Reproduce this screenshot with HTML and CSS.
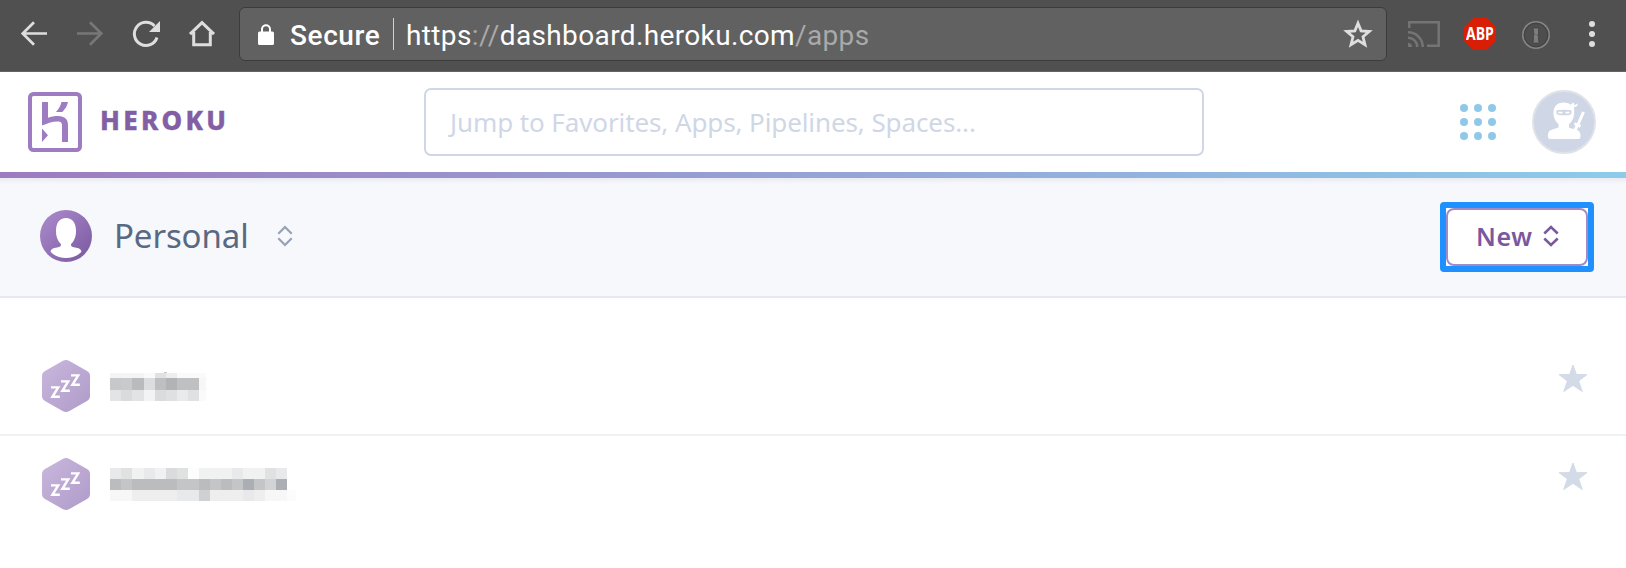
FILE: index.html
```html
<!DOCTYPE html>
<html lang="en">
<head>
<meta charset="utf-8">
<title>Heroku Dashboard</title>
<link rel="stylesheet" href="styles.css">
</head>
<body>
<div class="toolbar">
  <svg class="nav-icon" viewBox="0 0 28 28"><path d="M27 13.500H3M14 2.300 2.700 13.500 14 24.800" fill="none" stroke="#dedede" stroke-width="2.700"/></svg>
  <svg class="nav-icon" viewBox="0 0 28 28"><path d="M1 13.500h24M14 2.300l11.300 11.200L14 24.800" fill="none" stroke="#777" stroke-width="2.700"/></svg>
  <svg class="nav-icon" viewBox="0 0 28 28"><path d="M25 17.500A11.600 11.600 0 1 1 22.500 6" fill="none" stroke="#dedede" stroke-width="3"/><path d="M28 1v11H17z" fill="#dedede"/></svg>
  <svg class="nav-icon" viewBox="0 0 28 28"><path d="M2 14.200 14 2.600l12 11.600M5.700 12v12.800h16.600V12" fill="none" stroke="#dedede" stroke-width="3"/></svg>
  <div class="omnibox">
    <svg class="lock" viewBox="0 0 16 21"><path d="M4 9V5.200a4 4 0 0 1 8 0V9" fill="none" stroke="#fff" stroke-width="2"/><rect y="7.600" width="16" height="13.400" rx="1.600" fill="#fff"/></svg>
    <span class="secure">Secure</span>
    <span class="divider"></span>
    <span class="url">https<span class="dim">://</span>dashboard.heroku.com<span class="dim">/apps</span></span>
    <svg class="bookmark" viewBox="0 0 30 30"><path d="M15 4.300l3.100 7.600 8.200.6-6.300 5.300 2 8-7-4.400-7 4.400 2-8-6.300-5.300 8.200-.6z" fill="none" stroke="#dedede" stroke-width="2.800"/></svg>
  </div>
  <svg class="cast" viewBox="0 0 32 26" fill="none" stroke="#747474" stroke-width="2.500"><path d="M1.300 7V1.300h29.400v23.400H19"/><path d="M0 11.300A14.500 14.500 0 0 1 14.700 26M0 16.800A9 9 0 0 1 9.200 26"/><path d="M0 21.700A4.300 4.300 0 0 1 4.300 26H0z" fill="#747474" stroke="none"/></svg>
  <div class="abp"><span class="abp-label">ABP</span></div>
  <svg class="onepass" viewBox="0 0 30 30"><circle cx="15" cy="15" r="13.200" fill="none" stroke="#858585" stroke-width="1.600"/><circle cx="15" cy="15" r="11.700" fill="#4e4e4e" stroke="#414141"/><path d="M12 8h5.500v6l-1 1.300 1 1v4.500H18V23h-6v-2.200h.5V15.300l1-1-1-1.300V10H12z" fill="#7c7c7c" stroke="#3f3f3f" stroke-width=".7"/></svg>
  <svg class="more" viewBox="0 0 6 26" fill="#dedede"><circle cx="3" cy="3" r="3"/><circle cx="3" cy="13" r="3"/><circle cx="3" cy="23" r="3"/></svg>
</div>

<header class="header">
  <svg class="logo" viewBox="0 0 54 60" fill="#9e7cc1"><rect x="2" y="2" width="50" height="56" rx="3.500" fill="none" stroke="#9e7cc1" stroke-width="4"/><path d="M14 10h6v15.700c3-1 6.500-1.700 10-1.700 7 0 10 3.500 10 9v17h-6V33c0-2-1-3.600-4.500-3.600-5.500 0-11 2.100-15.500 4.200z"/><path d="M14 36.500v13.500l6-6.700zM33.500 10H40c-.7 3.800-3 7.300-5.700 10H28c2.700-3 4.800-6.500 5.500-10z"/></svg>
  <span class="brand">HEROKU</span>
  <div class="search">Jump to Favorites, Apps, Pipelines, Spaces...</div>
  <svg class="grid" viewBox="0 0 36 36" fill="#8fc9e9"><circle cx="4" cy="4" r="4"/><circle cx="18" cy="4" r="4"/><circle cx="32" cy="4" r="4"/><circle cx="4" cy="18" r="4"/><circle cx="18" cy="18" r="4"/><circle cx="32" cy="18" r="4"/><circle cx="4" cy="32" r="4"/><circle cx="18" cy="32" r="4"/><circle cx="32" cy="32" r="4"/></svg>
  <svg class="avatar" viewBox="0 0 64 64"><circle cx="32" cy="32" r="31" fill="#cfd7e6" stroke="#dfe2e9" stroke-width="2"/><path d="M21.500 23c0-7 4-10.500 10-10.500 3 0 5.500.8 7.300 2.300l2.500-2.600 1.200 2.800 3.500-1.500-1 2.800-3 .9c.8 9-.8 13-5 17v3.500l8 2.300c2.300.8 3.500 3 3.500 5.500v1.500q0 2-2 2H18q-2 0-2-2V45c0-2.800 1.500-4.500 3.500-5.200l7-2.300V34c-3-2.500-5-6-5-11z" fill="#fff"/><path d="M24.500 20.300q7.500-1.300 15 0v3q-1 2-3.500 2h-8q-2.500 0-3.500-2z" fill="#cfd7e6"/><path d="M26.500 22.700h4M33.500 22.700h4" stroke="#fff" stroke-width="1.800"/><path d="M51.500 22 46 34.500M42.500 33.500l6 3M45 36 42.500 41" fill="none" stroke="#fff" stroke-width="3"/></svg>
</header>
<div class="stripe"></div>

<div class="context">
  <svg class="person" viewBox="0 0 52 52"><defs><linearGradient id="pg" x1="0" y1="0" x2="1" y2="1"><stop stop-color="#ad8ccd"/><stop offset="1" stop-color="#79589f"/></linearGradient></defs><circle cx="26" cy="26" r="26" fill="url(#pg)"/><path d="M26 8c6.500 0 10 5 10 13 0 6-2 10.500-5 13 0 2.500.8 3 4 3.500 4 .7 5.500 1.300 6.500 4C38 46 32 48 26 48s-12-2-15.500-6.500c1-2.700 2.500-3.300 6.500-4 3.200-.5 4-1 4-3.500-3-2.500-5-7-5-13 0-8 3.500-13 10-13z" fill="#fff"/></svg>
  <span class="account">Personal</span>
  <svg class="chev" viewBox="0 0 16 22"><path d="M1.300 8.700 8 2l6.700 6.700M1.300 13.300 8 20l6.700-6.700" fill="none" stroke="#96a1b5" stroke-width="2.200"/></svg>
  <div class="highlight">
    <div class="new"><span class="new-label">New</span><svg class="new-chev" viewBox="0 0 16 22"><path d="M1.300 8.500 8 2l6.700 6.500M1.300 13.500 8 20l6.700-6.500" fill="none" stroke="#79589f" stroke-width="2.500"/></svg></div>
  </div>
</div>

<main class="apps">
  <div class="app first">
    <svg class="hex" viewBox="0 0 48 52"><defs><linearGradient id="hg" x1="0" y1="0" x2="1" y2="1"><stop stop-color="#c9b7de"/><stop offset="1" stop-color="#af9bc8"/></linearGradient></defs><path d="M21 .8q3-1.600 6 0l18 10.200q3 1.700 3 5v20q0 3.300-3 5L27 51.200q-3 1.600-6 0L3 41q-3-1.700-3-5V16q0-3.300 3-5z" fill="url(#hg)"/><path d="M9 27.400h7.200l-5.800 9.400h7.400M19 21.400h7.200l-5.800 9.400h7.400M29 15.400h7.200l-5.800 9.400h7.400" fill="none" stroke="#fff" stroke-width="2.400"/></svg>
    <svg class="redacted" viewBox="0 0 186 33" shape-rendering="crispEdges">
      <g transform="translate(0 -1)"><path fill="#f3f4f4" d="M0 1h34v5H0z"/><path fill="#fafafa" d="M34 1h11v5H34zM67 1h29v5H67z"/><path fill="#e0e1e2" d="M45 1h11v5H45z"/><path fill="#edeeef" d="M56 1h11v5H56z"/>
      <path fill="#c6c8c9" d="M0 6h11v12H0z"/><path fill="#c9cacb" d="M11 6h11v12H11z"/><path fill="#b9bbbd" d="M22 6h12v12H22z"/><path fill="#dcdddf" d="M34 6h11v12H34z"/><path fill="#bdbfc0" d="M45 6h11v12H45z"/><path fill="#b1b3b5" d="M56 6h11v12H56z"/><path fill="#bec0c2" d="M67 6h22v12H67z"/><path fill="#f7f7f8" d="M89 6h7v12h-7z"/>
      <path fill="#e3e4e5" d="M0 18h11v11H0z"/><path fill="#dadbdd" d="M11 18h11v11H11z"/><path fill="#e2e3e4" d="M22 18h12v11H22z"/><path fill="#f2f3f5" d="M34 18h11v11H34z"/><path fill="#d9dbdd" d="M45 18h11v11H45z"/><path fill="#dfe0e2" d="M56 18h11v11H56z"/><path fill="#e9eaeb" d="M67 18h11v11H67z"/><path fill="#e0e1e3" d="M78 18h11v11H78z"/><path fill="#fafafa" d="M89 18h7v11h-7z"/></g>
      <path fill="#c8c8c8" d="M54-1h3v1h-3z"/>
    </svg>
    <svg class="star" viewBox="0 0 30 29"><path d="M15 1l3.400 9.600H29L20.600 17 24.300 27.500 15 21.300 5.700 27.500 9.400 17 1 10.600h10.600z" fill="#d3dbe8" stroke="#d3dbe8" stroke-linejoin="round"/></svg>
  </div>
  <div class="app">
    <svg class="hex" viewBox="0 0 48 52"><path d="M21 .8q3-1.600 6 0l18 10.200q3 1.700 3 5v20q0 3.300-3 5L27 51.200q-3 1.600-6 0L3 41q-3-1.700-3-5V16q0-3.300 3-5z" fill="url(#hg)"/><path d="M9 27.400h7.200l-5.800 9.400h7.400M19 21.400h7.200l-5.800 9.400h7.400M29 15.400h7.200l-5.800 9.400h7.400" fill="none" stroke="#fff" stroke-width="2.400"/></svg>
    <svg class="redacted" viewBox="0 0 186 33" shape-rendering="crispEdges">
      <path fill="#e8e9ea" d="M0 0h11v11H0zM34 0h11v11H34zM122 0h11v11h-11zM166 0h11v11h-11z"/><path fill="#e0e2e2" d="M11 0h11v11H11zM67 0h11v11H67zM155 0h11v11h-11z"/><path fill="#f0f1f1" d="M22 0h12v11H22zM45 0h11v11H45zM89 0h33v11H89zM133 0h22v11h-22z"/><path fill="#d9dbdc" d="M56 0h11v11H56z"/><path fill="#fdfdfd" d="M78 0h11v11H78z"/>
      <path fill="#babcbe" d="M0 11h11v11H0zM22 11h34v11H22zM56 11h11v11H56zM89 11h11v11H89zM111 11h11v11h-11z"/><path fill="#c3c5c7" d="M11 11h11v11H11zM67 11h22v11H67zM100 11h11v11h-11zM122 11h11v11h-11zM144 11h11v11h-11z"/><path fill="#abaeb2" d="M133 11h11v11h-11zM166 11h11v11h-11z"/><path fill="#d2d3d4" d="M155 11h11v11h-11z"/>
      <path fill="#f7f7f8" d="M0 22h22v11H0zM155 22h22v11h-22z"/><path fill="#eeeeef" d="M22 22h45v11H22zM100 22h55v11h-55z"/><path fill="#e8e9ea" d="M67 22h22v11H67zM133 22h11v11h-11z"/><path fill="#cfd0d2" d="M89 22h11v11H89z"/><path fill="#fcfcfc" d="M177 22h9v11h-9z"/>
    </svg>
    <svg class="star" viewBox="0 0 30 29"><path d="M15 1l3.400 9.600H29L20.600 17 24.300 27.500 15 21.300 5.700 27.500 9.400 17 1 10.600h10.600z" fill="#d3dbe8" stroke="#d3dbe8" stroke-linejoin="round"/></svg>
  </div>
</main>
</body>
</html>
```
FILE: styles.css
```css
* { box-sizing: border-box; }
body { margin: 0; background: #fff; font-family: "Noto Sans", "Open Sans", sans-serif; overflow: hidden; }
svg { display: block; flex: none; overflow: visible; }

.toolbar { display: flex; align-items: flex-start; height: 72px; padding: 20px 31px 0 20px; background: #505050; border-bottom: 1px solid #656565; }
.nav-icon { width: 28px; height: 28px; margin-right: 28px; }
.omnibox { display: flex; align-items: center; width: 1148px; height: 54px; margin: -13px 0 0 -5px; padding: 0 13px 0 18px; background: #616161; border: 1px solid #3c3c3c; border-radius: 6px; flex: none; white-space: nowrap; font: 28px/34px Roboto, sans-serif; color: #fff; }
.lock { width: 16px; height: 21px; }
.secure { width: 90px; margin-left: 16px; padding-top: 4px; font-weight: 500; letter-spacing: .6px; }
.divider { width: 1px; height: 32px; margin: 0 12px 0 13px; background: #d0d0d0; }
.url { padding-top: 4px; letter-spacing: .37px; }
.dim { color: #a9a9a9; }
.bookmark { width: 30px; height: 30px; margin-left: auto; }
.cast { width: 32px; height: 26px; margin: 1px 24px 0 21px; }
.abp { display: flex; align-items: center; justify-content: center; width: 32px; height: 32px; margin-top: -2px; background: #d81e05; clip-path: polygon(29% 0, 71% 0, 100% 29%, 100% 71%, 71% 100%, 29% 100%, 0 71%, 0 29%); color: #fff; }
.abp-label { font: bold 17px/32px "Open Sans", sans-serif; transform: scaleX(.82); }
.onepass { width: 30px; height: 30px; margin: 0 0 0 25px; }
.more { width: 6px; height: 26px; margin: 1px 0 0 auto; }

.header { display: flex; align-items: center; height: 100px; padding: 0 30px 0 28px; }
.logo { width: 54px; height: 60px; }
.brand { width: 125px; margin-left: 18px; margin-top: -4px; font-size: 26px; line-height: 34px; font-weight: 800; letter-spacing: 3.3px; color: #825fa5; -webkit-text-stroke: .4px #825fa5; }
.search { width: 780px; height: 68px; margin-left: 199px; padding-left: 24px; border: 2px solid #cfd7e6; border-radius: 7px; font-size: 26px; line-height: 65px; letter-spacing: -.1px; color: #cfd7e6; white-space: nowrap; flex: none; }
.grid { width: 36px; height: 36px; margin-left: auto; }
.avatar { width: 64px; height: 64px; margin-left: 36px; }
.stripe { height: 6px; background: linear-gradient(90deg, #9e7bc0, #8dcbea); }

.context { display: flex; align-items: center; height: 120px; padding: 0 32px 3px 40px; background: linear-gradient(#e9ebf2, #f6f8fc 6px); border-bottom: 2px solid #e7e9f2; }
.person { width: 52px; height: 52px; }
.account { width: 132px; margin-left: 22px; font-size: 33px; line-height: 40px; letter-spacing: -.1px; color: #596981; }
.chev { width: 16px; height: 22px; margin-left: 31px; }
.highlight { width: 154px; height: 70px; margin-left: auto; margin-top: 3px; background: #fff; border: 6px solid #1e90ff; border-radius: 4px; }
.new { display: flex; align-items: center; height: 58px; padding-left: 28px; border: 2px solid #a08bc6; border-radius: 8px; color: #79589f; }
.new-label { width: 58px; margin-top: -2px; font-size: 25px; line-height: 34px; font-weight: 600; letter-spacing: .6px; }
.new-chev { width: 16px; height: 22px; margin-left: 9px; margin-top: -2px; }

.app { display: flex; align-items: flex-start; height: 98px; padding: 22px 38px 0 42px; }
.app.first { height: 138px; padding-top: 62px; border-bottom: 2px solid #eff1f5; }
.hex { width: 48px; height: 52px; }
.redacted { width: 186px; height: 33px; margin-left: 20px; margin-top: 10px; }
.first .redacted { margin-top: 13px; }
.star { width: 30px; height: 29px; margin-left: auto; margin-top: 4px; }
```
